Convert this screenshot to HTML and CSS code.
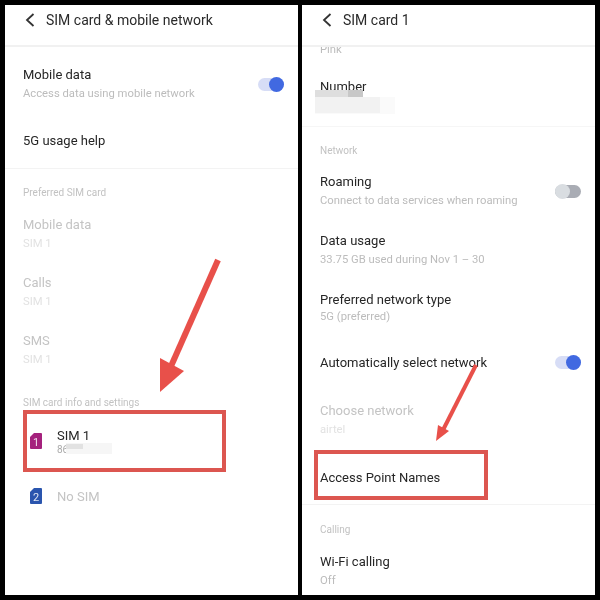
FILE: index.html
```html
<!DOCTYPE html>
<html lang="en">
<head>
<meta charset="utf-8">
<title>SIM card settings</title>
<link rel="stylesheet" href="styles.css">
</head>
<body>
<main class="frame">
  <section class="panel panel-left">
    <header class="bar">
      <svg class="back" width="10" height="14" viewBox="0 0 10 14"><path d="M8.5 1 L2 7 L8.5 13" fill="none" stroke="#333" stroke-width="1.8"/></svg>
      <h1 class="bar-title">SIM card &amp; mobile network</h1>
    </header>
    <div class="list">
      <div class="row row-first">
        <div class="text"><div class="title">Mobile data</div><div class="sub">Access data using mobile network</div></div>
        <span class="toggle toggle-on"></span>
      </div>
      <div class="row row-single row-ruled"><div class="title">5G usage help</div></div>
      <div class="label">Preferred SIM card</div>
      <div class="row"><div class="text"><div class="title off">Mobile data</div><div class="sub faint">SIM 1</div></div></div>
      <div class="row"><div class="text"><div class="title off">Calls</div><div class="sub faint">SIM 1</div></div></div>
      <div class="row"><div class="text"><div class="title off">SMS</div><div class="sub faint">SIM 1</div></div></div>
      <div class="label label-sim">SIM card info and settings</div>
      <div class="sim sim-one">
        <svg class="sim-icon" width="12" height="16" viewBox="0 0 12 16"><path d="M4 0 H11 a1 1 0 0 1 1 1 V15 a1 1 0 0 1 -1 1 H1 a1 1 0 0 1 -1 -1 V4 Z" fill="#a5217d"/><text x="6" y="12.5" text-anchor="middle" class="sim-num">1</text></svg>
        <div class="text"><div class="title">SIM 1</div><div class="sim-sub">86</div></div>
      </div>
      <div class="sim sim-two">
        <svg class="sim-icon" width="12" height="16" viewBox="0 0 12 16"><path d="M4 0 H11 a1 1 0 0 1 1 1 V15 a1 1 0 0 1 -1 1 H1 a1 1 0 0 1 -1 -1 V4 Z" fill="#2a55ae"/><text x="6" y="12.5" text-anchor="middle" class="sim-num">2</text></svg>
        <div class="title off">No SIM</div>
      </div>
    </div>
    <div class="patch patch-sim"></div>
    <div class="patch patch-sim-dark"></div>
    <div class="redbox redbox-sim"></div>
    <svg class="arrows" width="293" height="590" viewBox="0 0 293 590">
      <path d="M213 255 L163 368" stroke="#e8504a" stroke-width="6" fill="none"/>
      <path d="M155 353 L179 366 L155 387 Z" fill="#e8504a"/>
    </svg>
  </section>

  <section class="panel panel-right">
    <header class="bar">
      <svg class="back" width="10" height="14" viewBox="0 0 10 14"><path d="M8.5 1 L2 7 L8.5 13" fill="none" stroke="#333" stroke-width="1.8"/></svg>
      <h1 class="bar-title">SIM card 1</h1>
    </header>
    <div class="list">
      <div class="sub pink">Pink</div>
      <div class="row-number title">Number</div>
      <div class="label label-net">Network</div>
      <div class="row">
        <div class="text"><div class="title">Roaming</div><div class="sub">Connect to data services when roaming</div></div>
        <span class="toggle toggle-off"></span>
      </div>
      <div class="row row-data"><div class="text"><div class="title">Data usage</div><div class="sub">33.75 GB used during Nov 1 – 30</div></div></div>
      <div class="row"><div class="text"><div class="title">Preferred network type</div><div class="sub sub-tight">5G (preferred)</div></div></div>
      <div class="row row-single row-auto">
        <div class="title">Automatically select network</div>
        <span class="toggle toggle-on"></span>
      </div>
      <div class="row row-choose"><div class="text"><div class="title off">Choose network</div><div class="sub faint">airtel</div></div></div>
      <div class="row row-single row-ruled row-apn"><div class="title">Access Point Names</div></div>
      <div class="label label-call">Calling</div>
      <div class="row"><div class="text"><div class="title">Wi-Fi calling</div><div class="sub">Off</div></div></div>
    </div>
    <div class="patch patch-num-soft"></div>
    <div class="patch patch-num-light"></div>
    <div class="patch patch-num-grey"></div>
    <div class="patch patch-num-dark"></div>
    <div class="redbox redbox-apn"></div>
    <svg class="arrows" width="293" height="590" viewBox="0 0 293 590">
      <path d="M174 360 L140 427" stroke="#e8504a" stroke-width="4" fill="none"/>
      <path d="M136 420 L147 426 L134 436 Z" fill="#e8504a"/>
    </svg>
  </section>
</main>
</body>
</html>
```

FILE: styles.css
```css
* { box-sizing: border-box; }
html, body { margin: 0; height: 100%; }
body {
  background: #000;
  font-family: Roboto, "Noto Sans", sans-serif;
  color: #262626;
}
.frame {
  width: 600px;
  height: 600px;
  padding: 5px;
  display: flex;
  gap: 4px;
}
.panel {
  position: relative;
  flex: 0 0 293px;
  height: 590px;
  background: #fff;
  overflow: hidden;
  display: flex;
  flex-direction: column;
  filter: blur(0.35px);
}
.bar {
  flex: 0 0 42px;
  display: flex;
  align-items: center;
  gap: 11px;
  padding: 0 0 10px 20px;
  border-bottom: 2px solid #f1f1f1;
  background: #fff;
}
.bar-title { margin: 0; font-size: 14px; font-weight: 400; color: #2a2a2a; }
.back { flex: none; }
.list { flex: 1; overflow: hidden; display: flex; flex-direction: column; }
.row {
  flex: none;
  height: 58px;
  padding: 0 14px 0 18px;
  display: flex;
  align-items: center;
  justify-content: space-between;
}
.row-first { margin-top: 8px; }
.row-single { height: 48px; }
.row-ruled { height: 56px; border-bottom: 1px solid #f3f3f3; }
.row-data { height: 59px; }
.row-auto { margin-top: 1px; }
.row-choose { margin-top: 5px; }
.row-apn { height: 54px; margin-top: 2px; }
.text { display: flex; flex-direction: column; }
.title { font-size: 13px; line-height: 19px; color: #262626; }
.title.off { color: #c4c4c4; }
.sub { font-size: 11.25px; line-height: 19px; color: #bcbcbc; }
.sub.faint { color: #e2e2e2; }
.sub-tight { margin-top: -2px; }
.label { flex: none; padding: 0 18px; font-size: 10px; line-height: 14px; color: #c2c2c2; margin-top: 17px; margin-bottom: 5px; }
.label-sim { margin-top: 17px; margin-bottom: 0; }
.label-net { margin-bottom: 4px; }
.label-call { margin-top: 18px; }
.sim { flex: none; display: flex; align-items: center; gap: 15px; padding-left: 25px; }
.sim-one { margin-top: 14px; height: 34px; }
.sim-two { margin-top: 21px; height: 34px; }
.sim-num { font-family: Roboto, sans-serif; font-size: 11px; fill: #fff; fill-opacity: 0.85; }
.sim-sub { font-size: 10px; line-height: 12px; margin-top: -1px; color: #aaa; }
.pink { flex: none; margin-top: -7px; padding-left: 18px; }
.row-number { flex: none; padding-left: 18px; margin-top: 18px; height: 50px; border-bottom: 1px solid #f6f6f6; }
.toggle { position: relative; flex: none; width: 26px; height: 13px; border-radius: 7px; }
.toggle::after { content: ""; position: absolute; top: -1px; width: 15px; height: 15px; border-radius: 50%; }
.toggle-on { background: #d7ddf6; }
.toggle-on::after { right: 0; background: #4169e1; }
.toggle-off { background: #a9acb4; }
.toggle-off::after { left: 0; background: #d9dde1; }
.patch { position: absolute; }
.patch-sim { left: 61px; top: 438px; width: 46px; height: 11px; background: #f6f6f6; }
.patch-sim-dark { left: 61px; top: 439px; width: 17px; height: 5px; background: #e2e2e2; }
.patch-num-soft { left: 13px; top: 92px; width: 80px; height: 17px; background: #fafafa; }
.patch-num-light { left: 13px; top: 92px; width: 65px; height: 16px; background: #f2f2f2; }
.patch-num-grey { left: 13px; top: 85px; width: 48px; height: 7px; background: #dedede; }
.patch-num-dark { left: 46px; top: 85px; width: 15px; height: 7px; background: #c8c8c8; }
.redbox { position: absolute; border: 4px solid #dc5650; }
.redbox-sim { left: 18px; top: 405px; width: 203px; height: 62px; }
.redbox-apn { left: 12px; top: 445px; width: 174px; height: 50px; }
.arrows { position: absolute; left: 0; top: 0; pointer-events: none; }
```
